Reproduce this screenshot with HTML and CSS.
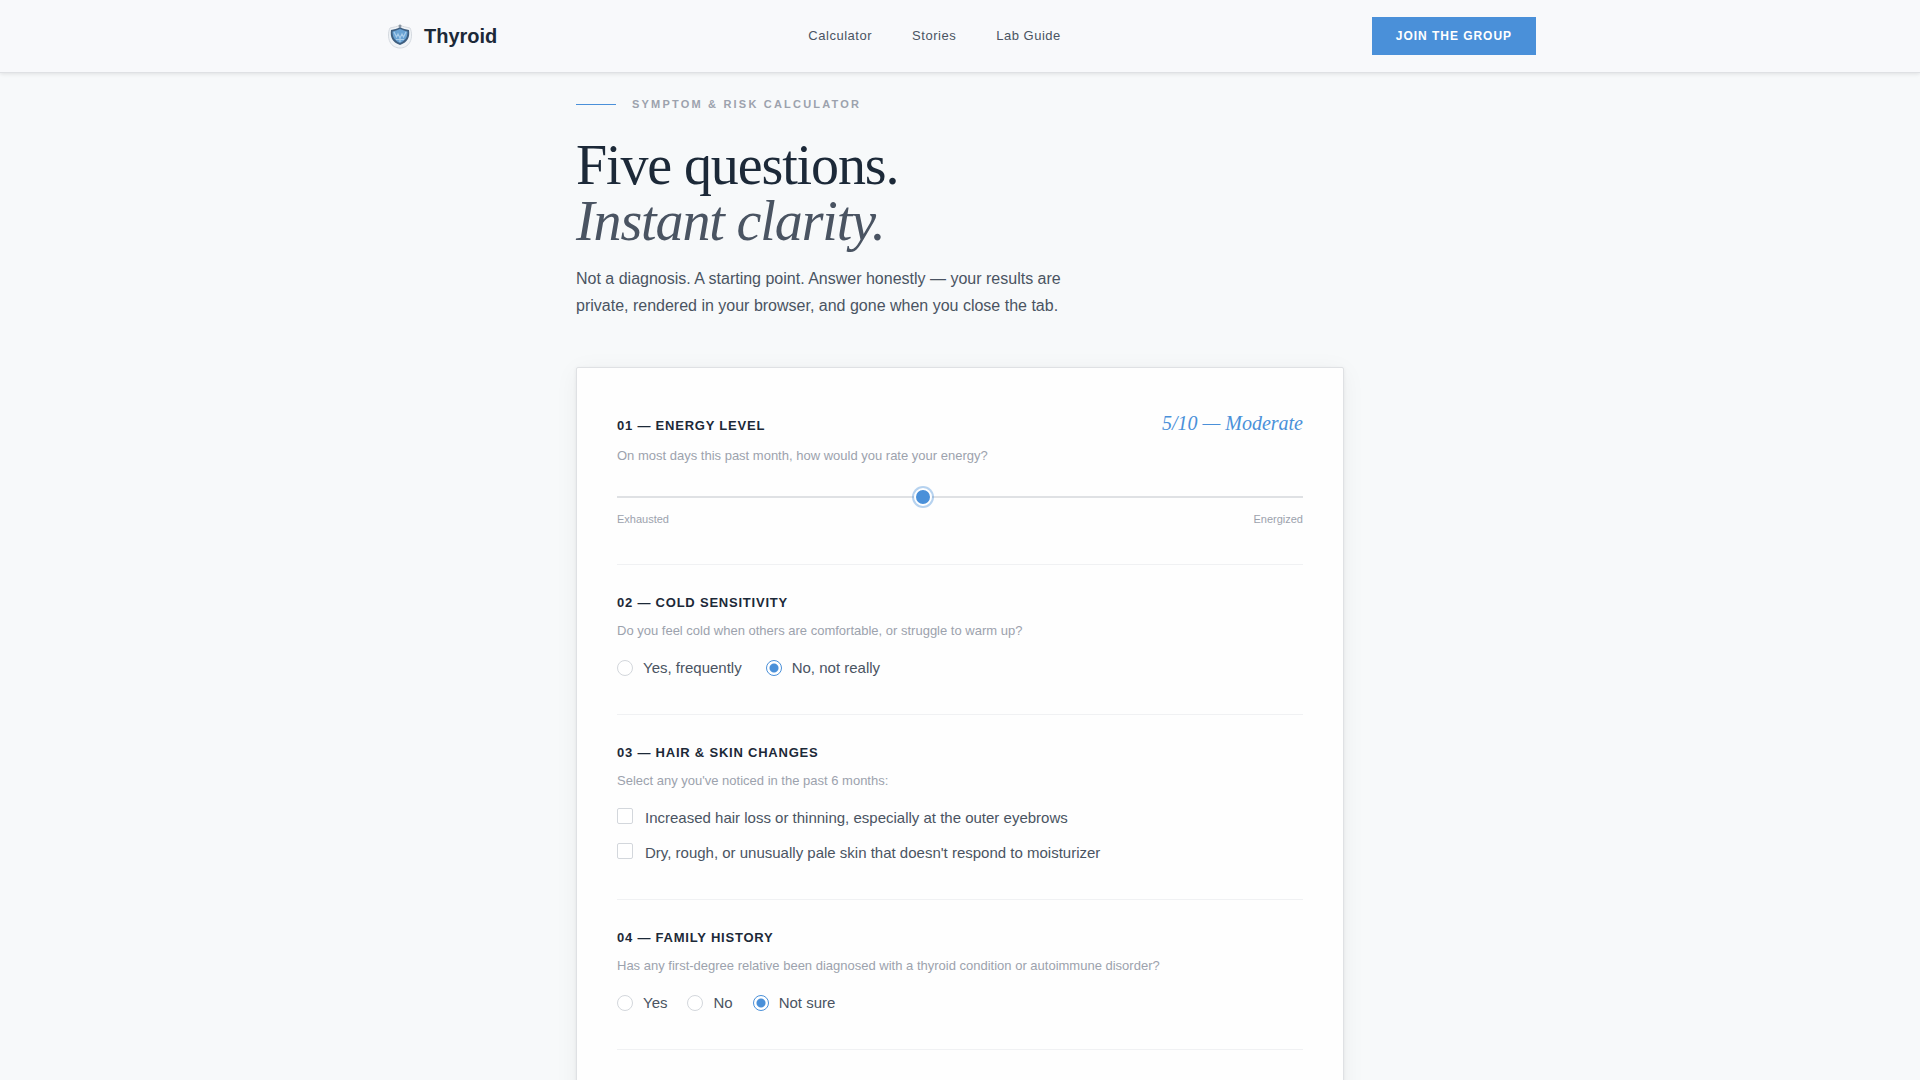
FILE: index.html
```html
<!DOCTYPE html>
<html lang="en">
<head>
  <meta charset="UTF-8">
  <meta name="viewport" content="width=device-width, initial-scale=1.0">
  <title>Thyroid</title>
  <link rel="stylesheet" href="styles.css">
</head>
<body>
  <header class="site-header">
    <div class="header-inner">
      <a class="logo" href="#">
        <svg class="logo-mark" viewBox="0 0 32 32" aria-hidden="true">
          <path d="M16 5c3 2 6 2 10 3 2 4 2 10 0 14-2 4-6 6-10 6s-8-2-10-6c-2-4-2-10 0-14 4-1 7-1 10-3z" fill="#f1f4f7" stroke="#d5dae0"/>
          <path d="M16 7c3 2 6 2 9 3 1 7-1 12-9 15-8-3-10-8-9-15 3-1 6-1 9-3z" fill="#3f5f80"/>
          <path d="M16 9c3 1 5 2 7.500 2.500 0 5-1.500 9-7.500 11.500-6-2.500-7.500-6.500-7.500-11.500 2.500-.5 4.500-1.500 7.500-2.500z" fill="#6aa3d4"/>
          <path d="M10 12l2.500 5 1.500-3 2 4 2-4 1.500 3 2.500-5M12 19.500h8M16 18v4" fill="none" stroke="#a9cdea" stroke-width="1.200"/>
          <circle cx="16" cy="6" r="1.500" fill="#8d99a6"/>
        </svg>
        <span>Thyroid</span>
      </a>
      <nav class="nav">
        <a href="#calculator">Calculator</a>
        <a href="#stories">Stories</a>
        <a href="#lab-guide">Lab Guide</a>
      </nav>
      <button class="btn-join" type="button">Join the Group</button>
    </div>
  </header>

  <main class="calculator" id="calculator">
    <p class="eyebrow">Symptom &amp; Risk Calculator</p>
    <h1>Five questions.<br><em>Instant clarity.</em></h1>
    <p class="intro">Not a diagnosis. A starting point. Answer honestly — your results are private, rendered in your browser, and gone when you close the tab.</p>

    <form class="card">
      <section class="question">
        <div class="question-head">
          <label class="question-title" for="energy">01 — Energy Level</label>
          <output class="energy-value" id="energy-value" for="energy">5/10 — Moderate</output>
        </div>
        <p class="question-text">On most days this past month, how would you rate your energy?</p>
        <input class="slider" type="range" id="energy" min="1" max="10" value="5">
        <div class="slider-labels">
          <span>Exhausted</span>
          <span>Energized</span>
        </div>
      </section>

      <section class="question" role="radiogroup" aria-labelledby="cold-title">
        <h2 class="question-title" id="cold-title">02 — Cold Sensitivity</h2>
        <p class="question-text">Do you feel cold when others are comfortable, or struggle to warm up?</p>
        <div class="options">
          <label class="option"><input type="radio" name="cold" value="yes">Yes, frequently</label>
          <label class="option"><input type="radio" name="cold" value="no" checked>No, not really</label>
        </div>
      </section>

      <section class="question" role="group" aria-labelledby="hair-title">
        <h2 class="question-title" id="hair-title">03 — Hair &amp; Skin Changes</h2>
        <p class="question-text">Select any you've noticed in the past 6 months:</p>
        <div class="checks">
          <label class="check"><input type="checkbox" name="hair">Increased hair loss or thinning, especially at the outer eyebrows</label>
          <label class="check"><input type="checkbox" name="skin">Dry, rough, or unusually pale skin that doesn't respond to moisturizer</label>
        </div>
      </section>

      <section class="question" role="radiogroup" aria-labelledby="family-title">
        <h2 class="question-title" id="family-title">04 — Family History</h2>
        <p class="question-text">Has any first-degree relative been diagnosed with a thyroid condition or autoimmune disorder?</p>
        <div class="options options-tight">
          <label class="option"><input type="radio" name="family" value="yes">Yes</label>
          <label class="option"><input type="radio" name="family" value="no">No</label>
          <label class="option"><input type="radio" name="family" value="unsure" checked>Not sure</label>
        </div>
      </section>
    </form>
  </main>

  <script>
    const energy = document.getElementById('energy');
    const energyValue = document.getElementById('energy-value');

    energy.addEventListener('input', () => {
      const n = Number(energy.value);
      const word = n < 4 ? 'Low' : n < 8 ? 'Moderate' : 'High';
      energyValue.textContent = `${n}/10 — ${word}`;
    });
  </script>
</body>
</html>
```
FILE: styles.css
```css
:root {
  --ink: #1c2938;
  --text: #4a5462;
  --muted: #9ca2ad;
  --blue: #4a90d9;
  --line: #dfe1e4;
}
* {
  box-sizing: border-box;
}
body {
  margin: 0;
  background: #f7f9fa;
  color: var(--text);
  font-family: "Liberation Sans", Arial, sans-serif;
}
h1, h2, p {
  margin: 0;
}

/* header */
.site-header {
  background: #f8f9fb;
  border-bottom: 1px solid var(--line);
  box-shadow: 0 1px 4px rgba(0, 0, 0, 0.1);
}
.header-inner {
  display: flex;
  align-items: center;
  justify-content: space-between;
  max-width: 1200px;
  height: 72px;
  margin: 0 auto;
  padding: 0 24px;
}
.logo {
  display: flex;
  align-items: center;
  gap: 8px;
  color: var(--ink);
  font-size: 20px;
  font-weight: bold;
  text-decoration: none;
}
.logo-mark {
  width: 32px;
  height: 32px;
}
.nav {
  display: flex;
  gap: 40px;
}
.nav a {
  color: var(--text);
  font-size: 13px;
  line-height: 16px;
  letter-spacing: 0.04em;
  text-decoration: none;
}
.btn-join {
  padding: 12px 24px;
  border: none;
  background: var(--blue);
  color: #fff;
  font-family: inherit;
  font-size: 12px;
  font-weight: bold;
  line-height: 14px;
  letter-spacing: 0.08em;
  text-transform: uppercase;
  cursor: pointer;
}

/* intro */
.calculator {
  max-width: 816px;
  margin: 0 auto;
  padding: 24px 24px 80px;
}
.eyebrow {
  display: flex;
  align-items: center;
  gap: 16px;
  color: var(--muted);
  font-size: 11px;
  font-weight: bold;
  line-height: 15px;
  letter-spacing: 0.2em;
  text-transform: uppercase;
}
.eyebrow::before {
  content: "";
  width: 40px;
  height: 1px;
  background: var(--blue);
}
h1 {
  margin-top: 25px;
  color: var(--ink);
  font-family: "Liberation Serif", "Times New Roman", serif;
  font-size: 56px;
  font-weight: normal;
  line-height: 56px;
  letter-spacing: -0.02em;
}
h1 em {
  color: var(--text);
}
.intro {
  max-width: 500px;
  margin-top: 16px;
  font-size: 16px;
  line-height: 27px;
}

/* form card */
.card {
  min-height: 100vh;
  margin-top: 48px;
  padding: 40px;
  border: 1px solid var(--line);
  border-radius: 2px;
  background: #fefefe;
  box-shadow: 0 1px 4px rgba(0, 0, 0, 0.06), 0 4px 24px rgba(0, 0, 0, 0.05);
}
.question {
  padding: 28px 0 34px;
  border-bottom: 1px solid #f0f1f3;
}
.question:first-child {
  padding: 0 0 38px;
}
.question-head {
  display: flex;
  align-items: baseline;
  justify-content: space-between;
}
.question-title {
  color: var(--ink);
  font-size: 13px;
  font-weight: bold;
  line-height: 20px;
  letter-spacing: 0.06em;
  text-transform: uppercase;
}
.energy-value {
  color: var(--blue);
  font-family: "Liberation Serif", "Times New Roman", serif;
  font-size: 20px;
  font-style: italic;
  line-height: 30px;
}
.question-text {
  margin-top: 8px;
  color: var(--muted);
  font-size: 13px;
  line-height: 20px;
}
.slider {
  -webkit-appearance: none;
  appearance: none;
  display: block;
  width: 100%;
  height: 2px;
  margin: 30px 0 14px;
  background: var(--line);
  cursor: pointer;
}
.slider::-webkit-slider-thumb {
  -webkit-appearance: none;
  width: 18px;
  height: 18px;
  border: 2px solid #fff;
  border-radius: 50%;
  background: var(--blue);
  box-shadow: 0 0 0 2px rgba(74, 144, 217, 0.4);
}
.slider-labels {
  display: flex;
  justify-content: space-between;
  color: var(--muted);
  font-size: 11px;
  line-height: 14px;
}

.options {
  display: flex;
  gap: 24px;
  margin-top: 15px;
}
.options-tight {
  gap: 20px;
}
.option,
.check {
  display: flex;
  align-items: center;
  gap: 10px;
  font-size: 15px;
  line-height: 24px;
  cursor: pointer;
}
.checks {
  display: grid;
  gap: 11px;
  margin-top: 15px;
}
.check {
  align-items: flex-start;
  gap: 12px;
}
.option input,
.check input {
  -webkit-appearance: none;
  appearance: none;
  flex-shrink: 0;
  width: 16px;
  height: 16px;
  margin: 0;
  border: 1px solid #d3d7dc;
  border-radius: 50%;
  background: #fff;
}
.check input {
  margin-top: 2px;
  border-radius: 2px;
}
.option input:checked {
  border-color: var(--blue);
  background: radial-gradient(circle, var(--blue) 4px, #fff 5px);
}
.check input:checked {
  border-color: var(--blue);
  background: var(--blue);
}
```
